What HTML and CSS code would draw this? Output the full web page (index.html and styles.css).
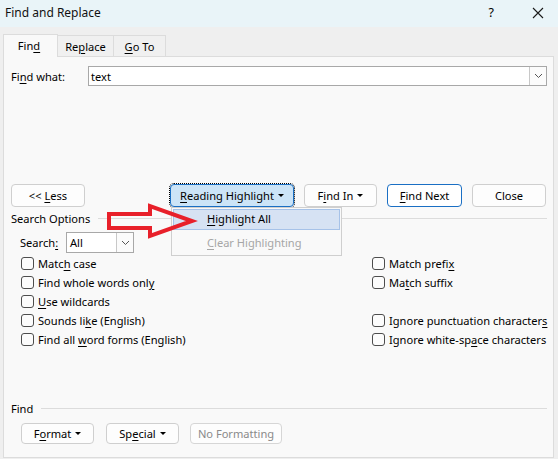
FILE: index.html
```html
<!DOCTYPE html>
<html>
<head>
<meta charset="utf-8">
<link rel="stylesheet" href="styles.css">
</head>
<body>
<div class="titlebar">
  <span class="title">Find and Replace</span>
  <span class="help">?</span>
  <svg class="close-x" width="12" height="12" viewBox="0 0 12 12"><path d="M1 1 L11 11 M11 1 L1 11" stroke="#1a1a1a" stroke-width="1.1" fill="none"/></svg>
</div>
<div class="tabs">
  <div class="tab active"><span>Fin<u>d</u></span></div>
  <div class="tab"><span>Re<u>p</u>lace</span></div>
  <div class="tab"><span><u>G</u>o To</span></div>
</div>
<div class="panel">
  <div class="find-row">
    <label class="find-label">Fi<u>n</u>d what:</label>
    <div class="combo">
      <span class="combo-text">text</span>
      <span class="combo-btn"><svg width="9" height="6" viewBox="0 0 9 6"><path d="M1 1 L4.5 4.5 L8 1" stroke="#555" stroke-width="1" fill="none"/></svg></span>
    </div>
  </div>
  <div class="btn-row">
    <button class="btn w74"><span>&lt;&lt; <u>L</u>ess</span></button>
    <div class="btn-group">
      <button class="btn focused w124"><span><u>R</u>eading Highlight</span><i class="caret"></i></button>
      <button class="btn w73"><span>F<u>i</u>nd In</span><i class="caret"></i></button>
      <button class="btn default w75"><span><u>F</u>ind Next</span></button>
      <button class="btn w74"><span>Close</span></button>
    </div>
  </div>
  <div class="section-head"><span>Search Options</span><span class="rule"></span></div>
  <div class="search-row">
    <span class="search-label">Search<u>:</u></span>
    <div class="select">
      <span class="select-text">All</span>
      <span class="select-btn"><svg width="9" height="6" viewBox="0 0 9 6"><path d="M1 1 L4.5 4.5 L8 1" stroke="#555" stroke-width="1" fill="none"/></svg></span>
    </div>
  </div>
  <div class="options">
    <div class="opt"><i class="cb"></i><span>Matc<u>h</u> case</span></div>
    <div class="opt"><i class="cb"></i><span>Match prefi<u>x</u></span></div>
    <div class="opt"><i class="cb"></i><span>Find whole words onl<u>y</u></span></div>
    <div class="opt"><i class="cb"></i><span>Ma<u>t</u>ch suffix</span></div>
    <div class="opt"><i class="cb"></i><span><u>U</u>se wildcards</span></div>
    <div class="opt"></div>
    <div class="opt"><i class="cb"></i><span>Sounds li<u>k</u>e (English)</span></div>
    <div class="opt"><i class="cb"></i><span>Ignore punctuation character<u>s</u></span></div>
    <div class="opt"><i class="cb"></i><span>Find all <u>w</u>ord forms (English)</span></div>
    <div class="opt"><i class="cb"></i><span>Ignore white-sp<u>a</u>ce characters</span></div>
  </div>
  <div class="section-head find-head"><span>Find</span><span class="rule"></span></div>
  <div class="bottom-row">
    <button class="btn small w73"><span>F<u>o</u>rmat</span><i class="caret"></i></button>
    <button class="btn small w73"><span>Sp<u>e</u>cial</span><i class="caret"></i></button>
    <button class="btn small disabled w92"><span>No Formatting</span></button>
  </div>
</div>

<div class="menu">
  <div class="menu-item hl"><span><u>H</u>ighlight All</span></div>
  <div class="menu-item dis"><span><u>C</u>lear Highlighting</span></div>
</div>

<svg class="arrow" width="558" height="459" viewBox="0 0 558 459">
  <polygon points="109,214 150,214 150,206 192,221 150,236 150,228 109,228" fill="none" stroke="#e8202a" stroke-width="4" stroke-linejoin="miter"/>
</svg>
</body>
</html>
```

FILE: styles.css
```css
* { box-sizing: border-box; }
html, body {
  margin: 0;
  padding: 0;
}
body {
  width: 558px;
  height: 459px;
  background: #efefef;
  font-family: "Noto Sans", "Open Sans", sans-serif;
  font-size: 11.1px;
  color: #000;
  position: relative;
  overflow: hidden;
}
u { text-decoration: underline; text-underline-offset: 2px; }

.titlebar {
  height: 27px;
  background: #e9f4f8;
  display: flex;
  align-items: center;
  padding-left: 5px;
  padding-bottom: 2px;
}
.title { flex: 1; font-size: 12px; color: #111; }
.help { margin-right: 38px; font-size: 12.5px; }
.close-x { margin-right: 14px; }

.tabs {
  display: flex;
  padding-left: 3px;
  margin-top: 7px;
  height: 22px;
  align-items: flex-end;
}
.tab {
  height: 21px;
  padding: 0;
  border: 1px solid #dcdcdc;
  border-bottom: none;
  background: #f0f0f0;
  display: flex;
  align-items: center;
  justify-content: center;
  margin-left: -1px;
}
.tab:nth-child(2) { width: 57px; }
.tab:nth-child(3) { width: 53px; }
.tab.active {
  height: 23px;
  width: 55px;
  margin-left: 0;
  background: #f9f9f9;
  position: relative;
  top: 1px;
  z-index: 1;
  padding-bottom: 2px;
  padding-right: 3px;
}

.panel {
  margin-left: 3px;
  width: 551px;
  height: 402px;
  border: 1px solid #dcdcdc;
  background: #f9f9f9;
  padding: 0 6px 0 7px;
}

.find-row {
  margin-top: 9px;
  display: flex;
  align-items: center;
  height: 20px;
}
.find-label { width: 77px; }
.combo {
  flex: 1;
  height: 20px;
  background: #fff;
  border: 1px solid #a8a8a8;
  display: flex;
  align-items: center;
  padding-left: 2px;
}
.combo-text { flex: 1; }
.combo-btn, .select-btn {
  width: 17px;
  height: 18px;
  border-left: 1px solid #c8c8c8;
  display: flex;
  align-items: center;
  justify-content: center;
  background: #fbfbfb;
}

.btn-row {
  margin-top: 98px;
  height: 23px;
  display: flex;
  justify-content: space-between;
  padding-right: 1px;
}
.btn-group { display: flex; gap: 10px; }
.btn {
  height: 23px;
  border: 1px solid #cfcfcf;
  border-radius: 4px;
  background: #fdfdfd;
  font-family: inherit;
  font-size: 11.1px;
  color: #000;
  padding: 0 0 1px 0;
  display: flex;
  align-items: center;
  justify-content: center;
  gap: 4px;
  white-space: nowrap;
}
.w74 { width: 74px; }
.w124 { width: 124px; }
.w73 { width: 73px; }
.w75 { width: 75px; }
.w92 { width: 92px; }
.btn.default { border: 1px solid #1a6fc4; background: #fff; }
.btn.focused {
  background: #cce4f7;
  border: 1px solid #1a6fc4;
  outline: 1px dotted #000;
  outline-offset: 0;
}
.caret {
  display: inline-block;
  width: 0;
  height: 0;
  border-left: 3px solid transparent;
  border-right: 3px solid transparent;
  border-top: 3px solid #000;
  margin-top: 1px;
}

.section-head {
  display: flex;
  align-items: center;
  margin-top: 3px;
  height: 16px;
}
.section-head .rule {
  flex: 1;
  height: 1px;
  background: #dcdcdc;
  margin-left: 8px;
  margin-top: 1px;
}

.search-row {
  margin-top: 6px;
  display: flex;
  align-items: center;
  height: 21px;
  padding-left: 9px;
}
.search-label { width: 46px; }
.select {
  width: 68px;
  height: 21px;
  background: #fff;
  border: 1px solid #a8a8a8;
  display: flex;
  align-items: center;
  padding-left: 3px;
}
.select-text { flex: 1; }
.select-btn { height: 19px; }

.options {
  margin-top: 1px;
  display: grid;
  grid-template-columns: 351px auto;
  grid-auto-rows: 19px;
  padding-left: 10px;
}
.opt {
  display: flex;
  align-items: center;
  white-space: nowrap;
}
.cb {
  width: 13px;
  height: 13px;
  border: 1px solid #4d4d4d;
  border-radius: 3px;
  background: #fcfcfc;
  margin-right: 4px;
}

.find-head { margin-top: 51px; }
.bottom-row {
  margin-top: 7px;
  display: flex;
  padding-left: 10px;
}
.btn.small { height: 21px; margin-right: 12px; }
.btn.small:nth-child(2) { margin-right: 11px; }
.btn.disabled { color: #8a8a8a; border-color: #d6d6d6; }

.menu {
  position: absolute;
  left: 171px;
  top: 207px;
  width: 171px;
  height: 49px;
  border: 1px solid #cfcfcf;
  background: #f9f9f9;
  padding: 1px;
}
.menu-item {
  height: 21px;
  display: flex;
  align-items: center;
  padding-left: 34px;
  margin-bottom: 2px;
  padding-bottom: 2px;
}
.menu-item.hl {
  background: #d6e2f3;
  border: 1px solid #a6c2e8;
  padding-left: 33px;
  padding-bottom: 2px;
}
.menu-item.dis { color: #a6a6a6; height: 22px; }

.arrow {
  position: absolute;
  left: 0;
  top: 0;
  pointer-events: none;
}
```
